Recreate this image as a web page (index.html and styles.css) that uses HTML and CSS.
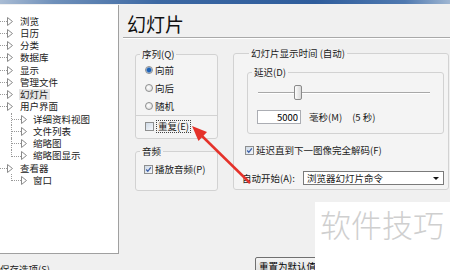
FILE: index.html
```html
<!DOCTYPE html>
<html lang="zh-CN">
<head>
  <meta charset="UTF-8">
  <title>选项 - 幻灯片</title>
  <link rel="stylesheet" href="styles.css">
</head>
<body>
  <div class="titlebar"></div>

  <div class="window">
    <!-- 左侧树 -->
    <aside class="tree">
      <ul class="nodes">
        <li><div class="row"><span class="hline"></span><svg class="tri" viewBox="0 0 6 9"><path d="M.5 .5 5.5 4.5 .5 8.5Z"/></svg><span class="label">浏览</span></div></li>
        <li><div class="row"><span class="hline"></span><svg class="tri" viewBox="0 0 6 9"><path d="M.5 .5 5.5 4.5 .5 8.5Z"/></svg><span class="label">日历</span></div></li>
        <li><div class="row"><span class="hline"></span><svg class="tri" viewBox="0 0 6 9"><path d="M.5 .5 5.5 4.5 .5 8.5Z"/></svg><span class="label">分类</span></div></li>
        <li><div class="row"><span class="hline"></span><svg class="tri" viewBox="0 0 6 9"><path d="M.5 .5 5.5 4.5 .5 8.5Z"/></svg><span class="label">数据库</span></div></li>
        <li><div class="row"><span class="hline"></span><svg class="tri" viewBox="0 0 6 9"><path d="M.5 .5 5.5 4.5 .5 8.5Z"/></svg><span class="label">显示</span></div></li>
        <li><div class="row"><span class="hline"></span><svg class="tri" viewBox="0 0 6 9"><path d="M.5 .5 5.5 4.5 .5 8.5Z"/></svg><span class="label">管理文件</span></div></li>
        <li><div class="row sel"><span class="hline"></span><svg class="tri" viewBox="0 0 6 9"><path d="M.5 .5 5.5 4.5 .5 8.5Z"/></svg><span class="label">幻灯片</span></div></li>
        <li>
          <div class="row"><span class="hline"></span><svg class="tri" viewBox="0 0 6 9"><path d="M.5 .5 5.5 4.5 .5 8.5Z"/></svg><span class="label">用户界面</span></div>
          <ul class="sub">
            <li><div class="row"><span class="hline"></span><svg class="tri" viewBox="0 0 6 9"><path d="M.5 .5 5.5 4.5 .5 8.5Z"/></svg><span class="label">详细资料视图</span></div></li>
            <li><div class="row"><span class="hline"></span><svg class="tri" viewBox="0 0 6 9"><path d="M.5 .5 5.5 4.5 .5 8.5Z"/></svg><span class="label">文件列表</span></div></li>
            <li><div class="row"><span class="hline"></span><svg class="tri" viewBox="0 0 6 9"><path d="M.5 .5 5.5 4.5 .5 8.5Z"/></svg><span class="label">缩略图</span></div></li>
            <li><div class="row"><span class="hline"></span><svg class="tri" viewBox="0 0 6 9"><path d="M.5 .5 5.5 4.5 .5 8.5Z"/></svg><span class="label">缩略图显示</span></div></li>
          </ul>
        </li>
        <li>
          <div class="row"><span class="hline"></span><svg class="tri" viewBox="0 0 6 9"><path d="M.5 .5 5.5 4.5 .5 8.5Z"/></svg><span class="label">查看器</span></div>
          <ul class="sub">
            <li><div class="row"><span class="hline"></span><svg class="tri" viewBox="0 0 6 9"><path d="M.5 .5 5.5 4.5 .5 8.5Z"/></svg><span class="label">窗口</span></div></li>
          </ul>
        </li>
      </ul>
    </aside>

    <!-- 右侧设置页 -->
    <main class="pane">
      <h1 class="page-title">幻灯片</h1>

      <div class="cols">
        <div class="col-left">
          <fieldset class="group seq">
            <legend>序列(Q)</legend>
            <div class="opt"><span class="radio on"></span>向前</div>
            <div class="opt"><span class="radio"></span>向后</div>
            <div class="opt"><span class="radio"></span>随机</div>
            <div class="sep"></div>
            <div class="opt repeat"><span class="box"></span><span class="focus">重复(E)</span></div>
          </fieldset>

          <fieldset class="group audio">
            <legend>音频</legend>
            <div class="opt"><span class="box on"><svg viewBox="0 0 9 9"><path d="M1.5 4.5 3.6 6.8 7.5 1.8"/></svg></span>播放音频(P)</div>
          </fieldset>
        </div>

        <fieldset class="group timing">
          <legend>幻灯片显示时间 (自动)</legend>

          <fieldset class="group delay">
            <legend>延迟(D)</legend>
            <div class="slider"><span class="thumb" style="margin-left: 21%"></span></div>
            <div class="delay-row">
              <input class="num" type="text" value="5000">
              <span class="unit">毫秒(M)</span>
              <span class="secs">(5 秒)</span>
            </div>
          </fieldset>

          <div class="opt decode"><span class="box on"><svg viewBox="0 0 9 9"><path d="M1.5 4.5 3.6 6.8 7.5 1.8"/></svg></span>延迟直到下一图像完全解码(F)</div>

          <div class="auto-row">
            <span>自动开始(A):</span>
            <div class="dropdown"><span>浏览器幻灯片命令</span><span class="caret"></span></div>
          </div>
        </fieldset>
      </div>
    </main>
  </div>

  <div class="footer">
    <span class="save">保存选项(S)</span>
    <button class="reset">重置为默认值(R)</button>
  </div>

  <!-- 覆盖层：标注箭头和水印 -->
  <svg class="arrow" viewBox="0 0 75 75">
    <line x1="65" y1="65" x2="17" y2="18" />
    <polygon points="7,8 22,14 13.5,23" />
  </svg>
  <div class="watermark">软件技巧</div>
</body>
</html>
```

FILE: styles.css
```css
* {
  box-sizing: border-box;
}

body {
  margin: 0;
  width: 450px;
  height: 270px;
  overflow: hidden;
  position: relative;
  background: #f0f0f0;
  color: #1a1a1a;
  font-family: "Noto Sans CJK SC", "Noto Sans", sans-serif;
  font-size: 9.5px;
  line-height: 12px;
}

/* 窗口标题栏残边 */
.titlebar {
  height: 4px;
  background: linear-gradient(to right, #a9bcd4 0%, #6f90ba 12%, #3c68a3 35%, #2f5d9c 70%, #4f79b0 90%, #9fb6d2 100%);
}

.window {
  display: flex;
  height: 250px;
}

/* 左侧树 */
.tree {
  width: 119px;
  flex: none;
  margin-top: 1px;
  padding-top: 10px;
  background: #fff;
  border-right: 1px solid #a0a0a0;
  border-bottom: 1px solid #a0a0a0;
}

.tree ul {
  list-style: none;
  margin: 0;
  padding: 0;
}

.row {
  display: flex;
  align-items: center;
  height: 12.25px;
  line-height: 11px;
  white-space: nowrap;
  color: #222;
}

.hline {
  width: 7px;
  border-top: 1px dotted #9a9a9a;
}

.tri {
  width: 6px;
  height: 9px;
  margin-right: 7px;
  fill: #fff;
  stroke: #8a8a8a;
  stroke-width: 1;
}

.row.sel .label {
  background: #e4e4e4;
  padding: 0 1px;
  margin-left: -1px;
}

.sub {
  margin-left: 11px !important;
}

.sub li {
  border-left: 1px dotted #9a9a9a;
}

.sub li:last-child {
  border-left-color: transparent;
}

.sub .hline {
  width: 9px;
}

.sub li:last-child .hline {
  align-self: flex-start;
  height: 7px;
  margin-left: -1px;
  width: 10px;
  border-top: none;
  border-left: 1px dotted #9a9a9a;
  border-bottom: 1px dotted #9a9a9a;
}

.sub .tri {
  margin-right: 6px;
}

/* 右侧设置页 */
.pane {
  flex: 1;
  padding-left: 4px;
}

.page-title {
  margin: 0;
  height: 34px;
  padding: 8px 0 0 4px;
  font-size: 19px;
  line-height: 24px;
  font-weight: normal;
  color: #111;
  border-bottom: 1px solid #a9a9a9;
  box-shadow: 0 1px 0 #fff;
}

.cols {
  display: flex;
  align-items: flex-start;
  padding-top: 9px;
}

.col-left {
  width: 83px;
  margin: 1px 0 0 12px;
  display: flex;
  flex-direction: column;
  gap: 6px;
}

.group {
  margin: 0;
  padding: 0;
  min-width: 0;
  border: 1px solid #d2d2d2;
  border-radius: 3px;
  background: #f4f4f4;
}

.group legend {
  margin-left: 4px;
  padding: 0 2px;
  line-height: 12px;
}

.opt {
  display: flex;
  align-items: center;
  gap: 2px;
  white-space: nowrap;
}

.seq {
  padding: 1px 0 2px;
}

.seq .opt {
  height: 18px;
  padding-left: 9px;
}

.seq .repeat {
  height: 20px;
}

.sep {
  border-top: 1px solid #d2d2d2;
}

.focus {
  border: 1px dotted #444;
  padding: 0 1px;
  line-height: 11px;
}

.audio {
  padding: 4px 0 13px;
}

.audio .opt {
  height: 16px;
  padding-left: 8px;
}

.radio {
  width: 8px;
  height: 8px;
  flex: none;
  border-radius: 50%;
  border: 1px solid #8e8f8f;
  background: radial-gradient(circle at 40% 40%, #fff, #d6d6d6);
}

.radio.on {
  background: radial-gradient(circle, #1e63b6 0 1.8px, #7fa6d8 2.6px, #eef2f8 3.5px);
}

.box {
  width: 9px;
  height: 9px;
  flex: none;
  border: 1px solid #8e8f8f;
  background: linear-gradient(135deg, #cfdae6, #f6f8fb);
}

.box svg {
  display: block;
  width: 7px;
  height: 7px;
  fill: none;
  stroke: #3c5fa8;
  stroke-width: 1.6;
}

.timing {
  width: 216px;
  margin-left: 15px;
  padding: 0 4px 4px 13px;
}

.timing > legend {
  margin-left: 2px;
}

.delay {
  margin-top: 7px;
  padding: 0 0 9px;
}

.slider {
  height: 17px;
  margin: 6px 13px 0 10px;
  display: flex;
  align-items: center;
  background:
    linear-gradient(#a8a8a8, #a8a8a8) left 8px / 100% 1px no-repeat,
    linear-gradient(#fff, #fff) left 9px / 100% 1px no-repeat;
}

.thumb {
  width: 8px;
  height: 15px;
  border: 1px solid #8a8a8a;
  border-radius: 2px;
  background: linear-gradient(to right, #fdfdfd, #d8d8d8);
}

.delay-row {
  display: flex;
  align-items: center;
  height: 14px;
  margin-top: 9px;
  padding-left: 9px;
  white-space: nowrap;
}

.num {
  width: 44px;
  height: 14px;
  margin: 0;
  padding: 0 2px;
  border: 1px solid #abadb3;
  background: #fff;
  font: inherit;
  line-height: 12px;
  text-align: right;
  color: #000;
}

.unit {
  margin-left: 8px;
}

.secs {
  margin-left: 10px;
}

.decode {
  height: 16px;
  margin: 8px 0 0 -2px;
}

.auto-row {
  display: flex;
  align-items: center;
  margin: 13px 0 0 -5px;
  white-space: nowrap;
}

.dropdown {
  display: flex;
  align-items: center;
  justify-content: space-between;
  width: 141px;
  height: 14px;
  margin-left: auto;
  padding: 0 4px 0 3px;
  border: 1px solid #7a7a7a;
  background: #fff;
}

.caret {
  border-left: 3px solid transparent;
  border-right: 3px solid transparent;
  border-top: 3px solid #111;
}

/* 底部 */
.footer {
  display: grid;
  grid-template-columns: 255px auto;
  align-items: start;
}

.save {
  padding-top: 9px;
  line-height: 12px;
}

.reset {
  justify-self: start;
  height: 18px;
  margin-top: 3px;
  padding: 0 3px;
  border: 1px solid #707070;
  border-radius: 2px;
  background: linear-gradient(#f4f4f4, #dddddd);
  font: inherit;
  color: #000;
}

/* 标注箭头 */
.arrow {
  position: absolute;
  left: 185px;
  top: 118px;
  width: 75px;
  height: 75px;
}

.arrow line {
  stroke: #e5322a;
  stroke-width: 2.5;
}

.arrow polygon {
  fill: #e5322a;
}

/* 水印 */
.watermark {
  position: absolute;
  left: 315px;
  top: 202px;
  width: 135px;
  height: 68px;
  padding-left: 5px;
  background: #fff;
  color: #cfcfcf;
  font-size: 31px;
  font-weight: 300;
  line-height: 44px;
  white-space: nowrap;
}
```
